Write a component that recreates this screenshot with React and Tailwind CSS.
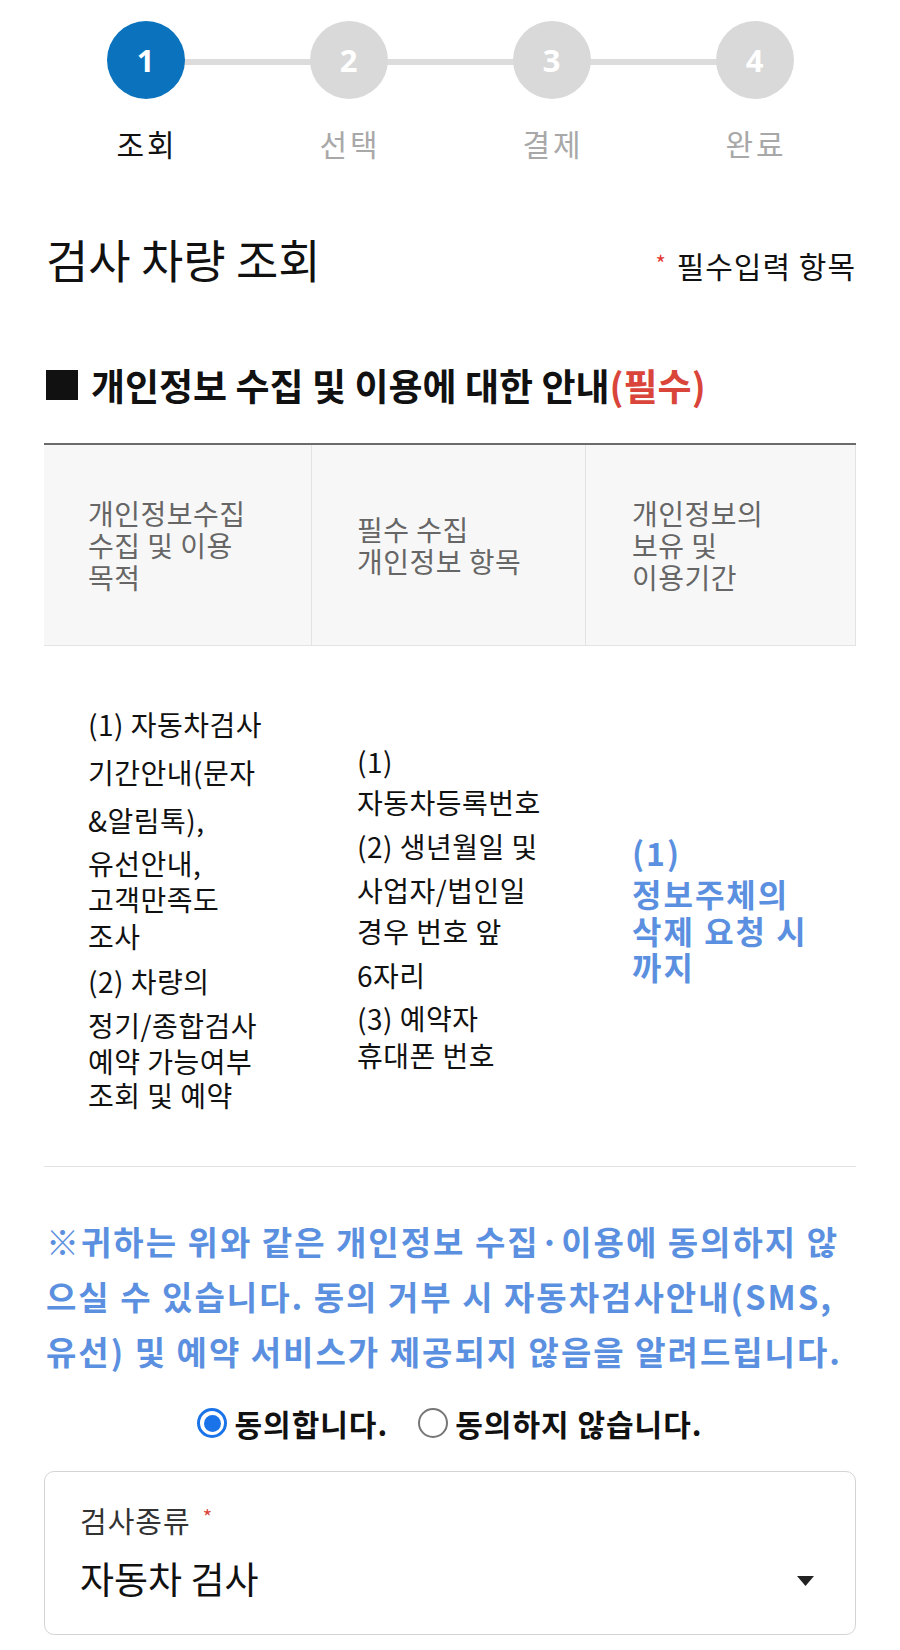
export default function App() {
  const steps = [
    { n: '1', label: '조회', active: true },
    { n: '2', label: '선택', active: false },
    { n: '3', label: '결제', active: false },
    { n: '4', label: '완료', active: false },
  ];

  const col1 = [
    ['(1) 자동차검사', 48],
    ['기간안내(문자', 48],
    ['&알림톡),', 48],
    ['유선안내,', 38],
    ['고객만족도', 34],
    ['조사', 40],
    ['(2) 차량의', 50],
    ['정기/종합검사', 38],
    ['예약 가능여부', 34],
    ['조회 및 예약', 34],
  ];
  const col2 = [
    ['(1)', 42],
    ['자동차등록번호', 40],
    ['(2) 생년월일 및', 48],
    ['사업자/법인일', 40],
    ['경우 번호 앞', 43],
    ['6자리', 45],
    ['(3) 예약자', 40],
    ['휴대폰 번호', 34],
  ];
  const col3 = [
    ['(1)', 46],
    ['정보주체의', 37],
    ['삭제 요청 시', 37],
    ['까지', 34],
  ];

  return (
    <div className="min-h-[1650px] w-[900px] bg-white font-['Noto_Sans_CJK_KR','Noto_Sans',sans-serif] text-[#111]">
      {/* Stepper */}
      <div className="relative flex pl-[44px] pt-[21px]">
        <div className="absolute left-[145px] top-[59px] h-[6px] w-[609px] bg-[#dcdcdc]" />
        {steps.map((s) => (
          <div key={s.n} className="relative flex w-[203px] flex-col items-center">
            <div
              className={
                s.active
                  ? 'flex h-[78px] w-[78px] items-center justify-center rounded-full bg-[#0b72bd]'
                  : 'flex h-[78px] w-[78px] items-center justify-center rounded-full bg-[#d9d9d9]'
              }
            >
              <span className="font-['Noto_Sans',sans-serif] text-[31px] font-bold leading-none text-white">
                {s.n}
              </span>
            </div>
            <div
              className={
                s.active
                  ? 'mt-[26px] pl-[3px] text-[30px] leading-[36px] tracking-[3px] text-[#111]'
                  : 'mt-[26px] pl-[3px] text-[30px] leading-[36px] tracking-[3px] text-[#a8a8a8]'
              }
            >
              {s.label}
            </div>
          </div>
        ))}
      </div>

      {/* Title row */}
      <div className="mt-[71px] flex items-baseline justify-between pl-[46px] pr-[44px]">
        <h1 className="text-[46px] font-normal leading-[52px] text-[#111]">검사 차량 조회</h1>
        <div className="text-[30px] leading-[36px] tracking-[1px] text-[#111]">
          <span className="relative top-[-6px] mr-[10px] text-[22px] text-[#e53935]">*</span>
          필수입력 항목
        </div>
      </div>

      {/* Section heading */}
      <div className="mt-[78px] flex items-center pl-[46px] text-[37px] font-bold leading-[42px] text-[#111]">
        <span className="mr-[13px] inline-block h-[30px] w-[32px] bg-[#111]" />
        <span>
          개인정보 수집 및 이용에 대한 안내<span className="text-[#d9453a]">(필수)</span>
        </span>
      </div>

      {/* Table */}
      <div className="ml-[44px] mt-[37px] w-[812px] border-t-2 border-[#6b6b6b]">
        <div className="flex h-[201px] border-b border-[#e3e3e3] bg-[#f7f7f7] text-[28px] leading-[32px] tracking-[0.5px] text-[#666]">
          <div className="flex w-[268px] items-center border-r border-[#e3e3e3] pl-[44px]">
            <div>
              <div>개인정보수집</div>
              <div>수집 및 이용</div>
              <div>목적</div>
            </div>
          </div>
          <div className="flex w-[274px] items-center border-r border-[#e3e3e3] pl-[45px]">
            <div>
              <div>필수 수집</div>
              <div>개인정보 항목</div>
            </div>
          </div>
          <div className="flex w-[270px] items-center border-r border-[#e3e3e3] pl-[46px]">
            <div>
              <div>개인정보의</div>
              <div>보유 및</div>
              <div>이용기간</div>
            </div>
          </div>
        </div>
        <div className="flex h-[521px] border-b border-[#e3e3e3] text-[28px] tracking-[0.5px] text-[#111]">
          <div className="flex w-[268px] items-center pl-[44px]">
            <div>
              {col1.map(([t, h]) => (
                <div key={t} className="whitespace-nowrap" style={{ height: h, lineHeight: h + 'px' }}>
                  {t}
                </div>
              ))}
            </div>
          </div>
          <div className="flex w-[274px] items-center pl-[45px]">
            <div>
              {col2.map(([t, h]) => (
                <div key={t} className="whitespace-nowrap" style={{ height: h, lineHeight: h + 'px' }}>
                  {t}
                </div>
              ))}
            </div>
          </div>
          <div className="flex w-[270px] items-center pl-[46px] text-[32px] font-bold tracking-[2px] text-[#5b8fe0]">
            <div>
              {col3.map(([t, h]) => (
                <div key={t} className="whitespace-nowrap" style={{ height: h, lineHeight: h + 'px' }}>
                  {t}
                </div>
              ))}
            </div>
          </div>
        </div>
      </div>

      {/* Notice */}
      <div className="mt-[47px] whitespace-nowrap px-[46px] text-[33px] font-bold leading-[55px] tracking-[2px] text-[#5b8fe0]">
        <div>※귀하는 위와 같은 개인정보 수집·이용에 동의하지 않</div>
        <div>으실 수 있습니다. 동의 거부 시 자동차검사안내(SMS,</div>
        <div>유선) 및 예약 서비스가 제공되지 않음을 알려드립니다.</div>
      </div>

      {/* Radios */}
      <div className="mt-[24px] flex h-[40px] items-center justify-center text-[30px] font-bold tracking-[1px] text-[#111]">
        <label className="flex items-center">
          <span className="flex h-[30px] w-[30px] items-center justify-center rounded-full border-[3px] border-[#1a73e8]">
            <span className="h-[17px] w-[17px] rounded-full bg-[#1a73e8]" />
          </span>
          <span className="ml-[7px]">동의합니다.</span>
        </label>
        <label className="ml-[30px] flex items-center">
          <span className="h-[30px] w-[30px] rounded-full border-2 border-[#767676]" />
          <span className="ml-[7px]">동의하지 않습니다.</span>
        </label>
      </div>

      {/* Select */}
      <div className="ml-[44px] mt-[28px] h-[164px] w-[812px] rounded-[10px] border-[1.5px] border-[#d4d4d4] pl-[35px] pr-[41px] pt-[31px]">
        <div className="text-[29px] leading-[34px] tracking-[1px] text-[#333]">
          검사종류
          <span className="relative top-[-8px] ml-[12px] text-[20px] text-[#d9453a]">*</span>
        </div>
        <div className="mt-[14px] flex items-center justify-between">
          <span className="text-[37px] leading-[44px] text-[#111]">자동차 검사</span>
          <svg width="17" height="10" viewBox="0 0 17 10" className="mt-[6px]">
            <path d="M0 0 L17 0 L8.5 10 Z" fill="#222" />
          </svg>
        </div>
      </div>
    </div>
  );
}
